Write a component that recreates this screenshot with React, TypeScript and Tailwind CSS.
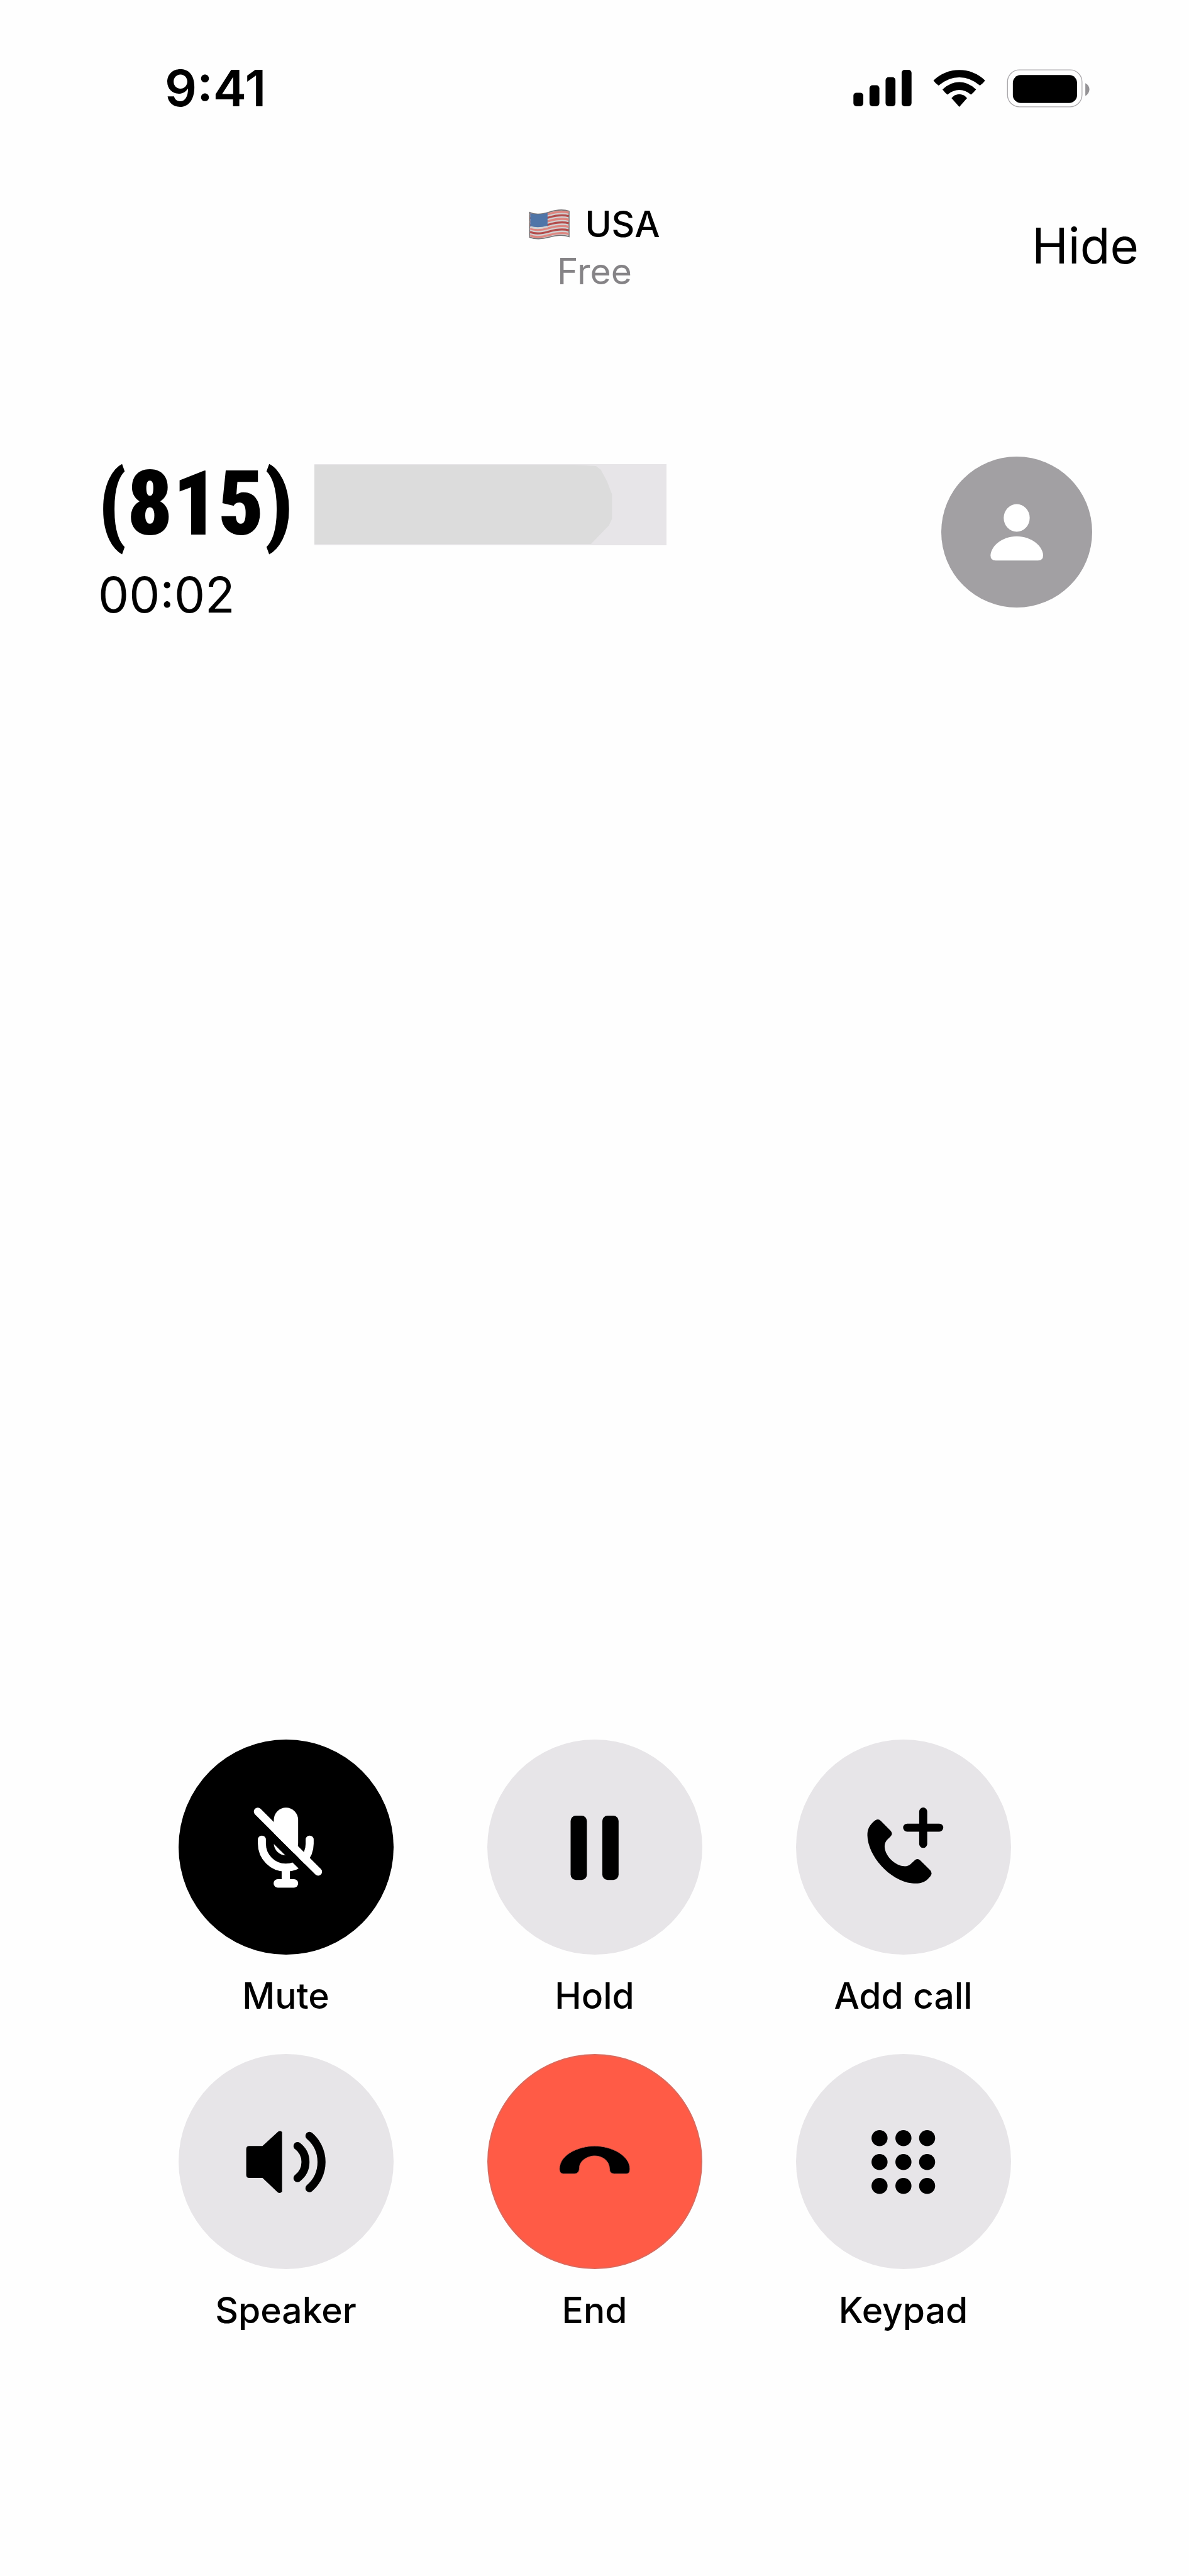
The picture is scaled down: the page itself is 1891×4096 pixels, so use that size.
import type { ReactNode } from 'react';
import { clsx } from 'clsx';

interface CallAction {
  id: string;
  label: string;
  icon: ReactNode;
  variant?: 'default' | 'active' | 'danger';
}

function SignalIcon() {
  return (
    <svg viewBox="0 0 94 60" className="w-[93px] h-[59px]" aria-hidden="true">
      <rect x="0" y="37" width="16" height="22" rx="5" />
      <rect x="26" y="25" width="16" height="34" rx="5" />
      <rect x="52" y="12" width="16" height="47" rx="5" />
      <rect x="78" y="0" width="16" height="59" rx="5" />
    </svg>
  );
}

function WifiIcon() {
  return (
    <svg viewBox="504 96 253 181" className="w-[83px] h-[59px]" aria-hidden="true">
      <path d="M505 148 Q560 97 631 97 T757 148 Q747 162 732 173 Q685 133 631 133 T530 173 Q514 162 505 148Z" />
      <path d="M549 192 Q586 156 631 156 T713 192 Q702 206 688 217 Q662 194 631 194 T573 217 Q559 206 549 192Z" />
      <path d="M593 234 Q611 215 631 215 T669 234 L631 277Z" />
    </svg>
  );
}

function BatteryIcon() {
  return (
    <svg viewBox="856 92 402 185" className="w-[132px] h-[61px]" aria-hidden="true">
      <rect x="860" y="95" width="361" height="179" rx="58" fill="none" stroke="#aaa8ab" strokeWidth="4" />
      <rect x="886" y="120" width="311" height="135" rx="38" />
      <path d="M1237 159 Q1256 168 1257 189 Q1256 211 1237 221Z" fill="#959396" />
    </svg>
  );
}

function UsaFlag() {
  const stripes = [0, 1, 2, 3, 4, 5, 6];
  return (
    <svg viewBox="112 84 196 144" className="w-[65px] h-12" aria-hidden="true">
      <path
        d="M116 98 C145 112 180 106 208 97 S275 82 305 92 V214 C275 204 240 208 208 217 S145 228 116 217Z"
        fill="#d2d0d1"
        stroke="#757375"
        strokeWidth="5"
      />
      {stripes.map((i) => (
        <path
          key={i}
          d={`M118 ${106 + i * 17} C145 ${120 + i * 17} 180 ${113 + i * 17} 208 ${105 + i * 17} S275 ${91 + i * 17} 304 ${99 + i * 17}`}
          fill="none"
          stroke={i % 2 ? '#b34c4b' : '#dd8781'}
          strokeWidth="10"
        />
      ))}
      <path d="M119 101 C145 111 175 108 202 99 V166 C175 174 145 176 119 168Z" fill="#4f75a8" />
      <path d="M119 168 C145 176 175 174 202 166" fill="none" stroke="#d2d0d1" strokeWidth="9" />
    </svg>
  );
}

function PersonIcon() {
  return (
    <svg viewBox="296 276 256 276" className="w-[84px] h-[91px]" aria-hidden="true">
      <ellipse cx="424" cy="344" rx="63" ry="67" />
      <path d="M297 525 C300 478 356 433 424 433 S550 478 552 525 Q552 550 527 550 H322 Q297 550 297 525Z" />
    </svg>
  );
}

/* Redacted digits — a lighter block with an uneven darker smear over it */
function MaskedDigits() {
  return (
    <svg viewBox="0 0 569 131" className="w-[560px] h-[129px]" role="img" aria-label="Hidden digits">
      <rect width="569" height="131" fill="#e7e5e8" />
      <path d="M0 1 H418 L455 3 L463 9 L473 28 L481 49 V88 L476 99 L447 129 H0Z" fill="#dcdcdc" />
    </svg>
  );
}

const ICON_CLASS = 'size-[171px] fill-current';

const ACTIONS: CallAction[] = [
  {
    id: 'mute',
    label: 'Mute',
    variant: 'active',
    icon: (
      <svg viewBox="316 343 522 522" className={ICON_CLASS} aria-hidden="true">
        <rect x="519" y="411" width="118" height="232" rx="59" />
        <path
          d="M461 566 V586 A116 116 0 0 0 693 586 V566"
          fill="none"
          stroke="currentColor"
          strokeWidth="39"
          strokeLinecap="round"
        />
        <rect x="557" y="710" width="40" height="60" />
        <rect x="518" y="758" width="119" height="41" rx="20" />
        <path d="M430 473 L735 775" stroke="#000" strokeWidth="37" />
        <path d="M441 430 L734 722" stroke="currentColor" strokeWidth="38" strokeLinecap="round" />
      </svg>
    ),
  },
  {
    id: 'hold',
    label: 'Hold',
    icon: (
      <svg viewBox="311 343 522 522" className={ICON_CLASS} aria-hidden="true">
        <rect x="456" y="450" width="79" height="312" rx="26" />
        <rect x="610" y="450" width="79" height="312" rx="26" />
      </svg>
    ),
  },
  {
    id: 'add-call',
    label: 'Add call',
    icon: (
      <svg viewBox="306 343 522 522" className={ICON_CLASS} aria-hidden="true">
        <path d="M425 477 Q443 460 458 475 L505 522 Q519 537 505 551 L487 569 Q475 585 477 605 C482 650 530 693 570 695 Q590 697 603 685 L622 667 Q636 654 650 667 L698 715 Q711 730 698 745 L685 759 C665 778 640 781 610 778 C500 765 395 645 393 545 C393 515 402 498 425 477Z" />
        <path d="M664 430 V587 M586 508 H742" stroke="currentColor" strokeWidth="39" strokeLinecap="round" />
      </svg>
    ),
  },
  {
    id: 'speaker',
    label: 'Speaker',
    icon: (
      <svg viewBox="316 336 522 522" className={ICON_CLASS} aria-hidden="true">
        <path d="M400 520 H464 L538 452 Q548 443 559 452 V742 Q548 753 538 745 L464 675 H400 Q385 675 385 660 V535 Q385 520 400 520Z" />
        <path
          d="M634 520 A98 98 0 0 1 634 676 M692 471 A167 167 0 0 1 692 725"
          fill="none"
          stroke="currentColor"
          strokeWidth="39"
          strokeLinecap="round"
        />
      </svg>
    ),
  },
  {
    id: 'end',
    label: 'End',
    variant: 'danger',
    icon: (
      <svg viewBox="313 336 522 522" className={ICON_CLASS} aria-hidden="true">
        <path
          d="M425 655 Q404 655 404 632 C404 560 500 520 575 520 C655 520 746 565 746 632 Q746 655 728 655 H672 Q647 655 647 632 C647 590 610 568 575 568 C540 568 501 592 501 625 Q501 655 475 655Z"
          stroke="#c9574b"
          strokeWidth="3"
        />
      </svg>
    ),
  },
  {
    id: 'keypad',
    label: 'Keypad',
    icon: (
      <svg viewBox="306 336 522 522" className={ICON_CLASS} aria-hidden="true">
        {[482, 598, 714].map((cy) =>
          [452, 568, 683].map((cx) => <circle key={`${cx}-${cy}`} cx={cx} cy={cy} r="39" />),
        )}
      </svg>
    ),
  },
];

function CallButton({ action }: { action: CallAction }) {
  const variant = action.variant ?? 'default';

  return (
    <button type="button" className="flex flex-col items-center gap-[34px] w-[342px] cursor-pointer">
      <span
        className={clsx(
          'flex items-center justify-center size-[342px] rounded-full',
          variant === 'default' && 'bg-[#e7e5e8] text-black',
          variant === 'active' && 'bg-black text-white',
          variant === 'danger' && 'bg-[#ff5b46] text-black border-2 border-[#d96a5e]',
        )}
      >
        {action.icon}
      </span>
      <span className="text-[57px] leading-[64px] font-medium whitespace-nowrap">{action.label}</span>
    </button>
  );
}

export default function App() {
  return (
    <div className="min-h-screen flex flex-col bg-[#fefefe] text-black font-['Inter',sans-serif]">
      {/* Status bar */}
      <div className="flex items-center justify-between pt-[92px] pl-[262px] pr-[158px]">
        <time className="text-[80px] leading-[96px] font-semibold">9:41</time>
        <div className="flex items-center gap-[34px]">
          <SignalIcon />
          <WifiIcon />
          <BatteryIcon />
        </div>
      </div>

      {/* Country + rate */}
      <header className="grid grid-cols-[1fr_auto_1fr] items-start mt-[131px] px-20">
        <div className="col-start-2 flex flex-col items-center text-[57px] leading-[75px]">
          <div className="flex items-center gap-6">
            <UsaFlag />
            <span className="font-medium">USA</span>
          </div>
          <span className="text-[#858386]">Free</span>
        </div>
        <button type="button" className="justify-self-end text-[78px] leading-[144px] cursor-pointer">
          Hide
        </button>
      </header>

      {/* Caller */}
      <section className="flex items-start justify-between mt-[257px] pl-[156px] pr-[154px]">
        <div className="flex flex-col gap-5">
          <div className="flex items-center">
            <h1 className="w-[344px] text-[142px] leading-[152px] font-black font-['Roboto_Condensed','Liberation_Sans',sans-serif]">
              (815)
            </h1>
            <MaskedDigits />
          </div>
          <p className="text-[78px] leading-[96px]">00:02</p>
        </div>
        <div className="flex items-center justify-center size-60 rounded-full bg-[#a2a0a3] fill-white">
          <PersonIcon />
        </div>
      </section>

      {/* Call controls */}
      <div className="grid grid-cols-[repeat(3,342px)] justify-center gap-x-[149px] gap-y-[60px] mt-auto pb-[390px]">
        {ACTIONS.map((action) => (
          <CallButton key={action.id} action={action} />
        ))}
      </div>
    </div>
  );
}
